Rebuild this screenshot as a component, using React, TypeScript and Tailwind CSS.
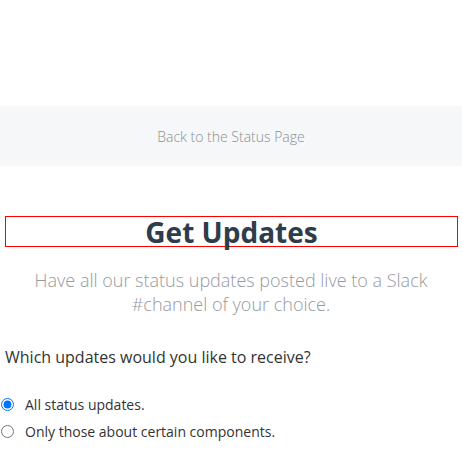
import React from 'react';

export default function App() {
  const [choice, setChoice] = React.useState('all');

  return (
    <div className="w-[462px] h-[462px] overflow-hidden bg-white font-['Open_Sans',sans-serif]">
      <div className="h-[106px]" />
      <div className="h-[60px] bg-[#f6f7f8] flex items-center justify-center">
        <a href="#" className="text-[14px] font-light text-[#8b9096]">Back to the Status Page</a>
      </div>

      <div className="mt-[50px] pl-[5px] pr-[4px]">
        <h1 className="border border-[#ff0000] h-[31px] flex items-center justify-center text-[28px] leading-[28px] font-bold text-[#2e3d4c]">
          Get Updates
        </h1>
      </div>

      <p className="mt-[21px] mx-auto w-[420px] text-center text-[18px] leading-[24px] font-light text-[#959a9f]">
        Have all our status updates posted live to a Slack #channel of your choice.
      </p>

      <p className="mt-[29px] pl-[5px] text-[16px] leading-[24px] text-[#333]">
        Which updates would you like to receive?
      </p>

      <div className="mt-[24px] flex flex-col gap-[5px] text-[14px] text-[#333]">
        <label className="flex items-center h-[22px]">
          <input
            type="radio"
            name="updates"
            checked={choice === 'all'}
            onChange={() => setChoice('all')}
            className="ml-[1px] mr-[11px] w-[13px] h-[13px]"
          />
          All status updates.
        </label>
        <label className="flex items-center h-[22px]">
          <input
            type="radio"
            name="updates"
            checked={choice === 'some'}
            onChange={() => setChoice('some')}
            className="ml-[1px] mr-[11px] w-[13px] h-[13px]"
          />
          Only those about certain components.
        </label>
      </div>
    </div>
  );
}
